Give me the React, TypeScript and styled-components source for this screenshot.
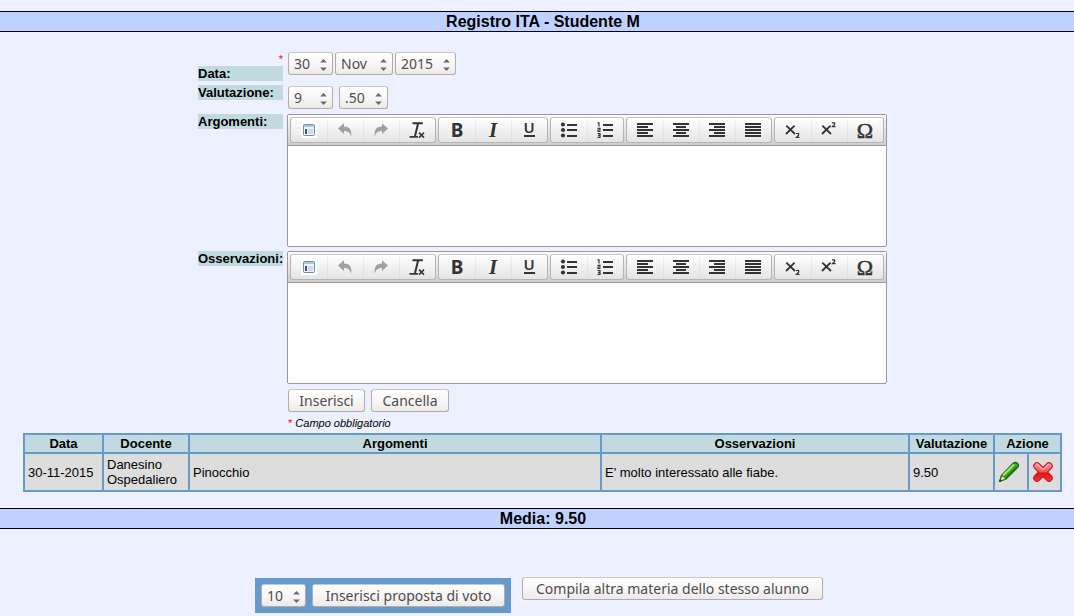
import React from 'react';
import styled, { createGlobalStyle } from 'styled-components';

const GlobalStyle = createGlobalStyle`
  *, *::before, *::after { box-sizing: border-box; }
  body {
    margin: 0;
    background: #ecf0ff;
    color: #000;
    font: 13px/15px "Liberation Sans", Arial, sans-serif;
    overflow: hidden;
  }
`;

const Page = styled.main`
  padding-top: 11px;
`;

const Banner = styled.h1`
  margin: 0;
  padding-left: 12px;
  height: 21px;
  border: solid #000;
  border-width: 1px 0;
  background: #bfd2ff;
  font-size: 16px;
  line-height: 19px;
  text-align: center;
`;

const Form = styled.form`
  display: grid;
  grid-template-columns: 85px minmax(0, 600px);
  justify-content: center;
  gap: 4px;
  padding: 20px 0 0 11px;
`;

const LabelCell = styled.div`
  font-weight: bold;
`;

const FieldLabel = styled.label`
  display: block;
  height: 15px;
  background: #c1dadf;
  white-space: nowrap;
`;

const Required = styled.span`
  color: #f00;
  font-size: 11px;
  font-weight: normal;
  font-style: normal;
`;

const StarLine = styled.div`
  height: 14px;
  line-height: 14px;
  text-align: right;
`;

const Fields = styled.div<{ $gap: number; $pad?: string }>`
  display: flex;
  align-items: flex-start;
  gap: ${(p) => p.$gap}px;
  padding: ${(p) => p.$pad ?? '1px 0 0 1px'};
`;

const controlFace = `
  height: 23px;
  border: 1px solid #b5aca3;
  border-top-color: #cdc6c0;
  border-radius: 3px;
  background: linear-gradient(#ffffff, #f8f7f6 50%, #edebe9);
  color: #4c4c4c;
  font: 14px/20px "Noto Sans", "Open Sans", sans-serif;
`;

const SelectBox = styled.span<{ $width: number }>`
  position: relative;
  display: block;
  flex: none;
  width: ${(p) => p.$width}px;
  height: 23px;

  svg {
    position: absolute;
    right: 6px;
    top: 7px;
    pointer-events: none;
  }
`;

const NativeSelect = styled.select`
  ${controlFace}
  display: block;
  width: 100%;
  padding: 0 0 0 5px;
  appearance: none;
`;

const Button = styled.button<{ $width: number }>`
  ${controlFace}
  flex: none;
  width: ${(p) => p.$width}px;
  padding: 0;
  white-space: nowrap;
`;

const Editor = styled.div`
  height: 133px;
  display: flex;
  flex-direction: column;
  border: 1px solid #999;
  border-radius: 2px;
  background: #fff;
`;

const Toolbar = styled.div`
  display: flex;
  flex: none;
  gap: 2px;
  height: 31px;
  padding: 2px;
  border-bottom: 1px solid #999;
  background: linear-gradient(#fbfbfb, #cfcfcf);
`;

const ToolGroup = styled.div`
  display: flex;
  height: 26px;
  border: 1px solid #b4b4b4;
  border-top-color: #c4c4c4;
  border-radius: 3px;
  background: linear-gradient(#ffffff, #e4e4e4);
`;

const Tool = styled.button`
  display: grid;
  place-items: center;
  width: 36px;
  height: 24px;
  padding: 0;
  border: 0;
  background: none;

  & + & {
    box-shadow: inset 1px 0 0 rgba(0, 0, 0, 0.04);
  }
`;

const EditorText = styled.textarea`
  flex: 1;
  width: 100%;
  padding: 8px;
  border: 0;
  outline: 0;
  resize: none;
  background: transparent;
  font: inherit;
`;

const Note = styled.p`
  grid-column: 2;
  margin: 0;
  padding: 0 0 0 1px;
  font-size: 11px;
  line-height: 14px;
  font-style: italic;
`;

const Register = styled.div`
  padding: 3px 12px 16px 23px;
`;

const Grid = styled.table`
  width: 100%;
  table-layout: fixed;
  border-collapse: collapse;
`;

const cellBorder = `border: 2px solid #6699cc;`;

const Head = styled.th`
  ${cellBorder}
  height: 19px;
  padding: 0;
  background: #c1dadf;
`;

const Cell = styled.td`
  ${cellBorder}
  height: 38px;
  padding: 0 3px;
  background: #dddddd;
`;

const IconLink = styled.a`
  display: flex;
`;

const Footer = styled.div`
  display: flex;
  justify-content: center;
  align-items: flex-start;
  gap: 11px;
  padding: 48px 0 0 4px;
`;

const Proposal = styled.form`
  display: flex;
  gap: 6px;
  margin-top: 1px;
  padding: 6px;
  height: 35px;
  background: #6699cc;
`;

function Select({ id, label, width, options }: { id: string; label: string; width: number; options: string[] }) {
  return (
    <SelectBox $width={width}>
      <NativeSelect id={id} aria-label={label} defaultValue={options[0]}>
        {options.map((o) => (
          <option key={o}>{o}</option>
        ))}
      </NativeSelect>
      <svg width="7" height="12" viewBox="0 0 7 12" fill="#6a6a6a">
        <path d="M3.5 0 L6.8 3.4 H.2Z M3.5 12 L6.8 8.6 H.2Z" />
      </svg>
    </SelectBox>
  );
}

const INK = '#333333';

const lines = (rows: number[][]) => (
  <g fill={INK}>
    {rows.map(([x, y, w]) => (
      <rect key={y} x={x} y={y} width={w} height="2" />
    ))}
  </g>
);

const GlyphText = styled.text`
  fill: ${INK};
  text-anchor: middle;
`;

const SansGlyph = styled(GlyphText)`
  font-family: "Noto Sans", sans-serif;
`;

const icons: Record<string, React.ReactNode> = {
  Modelli: (
    <>
      <rect x="0" y="0" width="16" height="16" fill="#fff" />
      <rect x="2.5" y="2.5" width="11" height="11" rx="1" fill="#eef4fa" stroke="#6d8dab" />
      <rect x="3" y="3" width="10" height="2" fill="#a9c8e6" />
      <rect x="4" y="7" width="2" height="5" fill="#2f5680" />
      <rect x="7" y="7" width="5" height="5" fill="#c9dcec" />
    </>
  ),
  Annulla: <path d="M1 6.5 7 1.2V4.4C12 4.4 15.2 7.2 14.2 14.6C13 10.6 11 9 7 9V12Z" fill="#a0a0a0" />,
  Ripristina: <path d="M15 6.5 9 1.2V4.4C4 4.4 .8 7.2 1.8 14.6C3 10.6 5 9 9 9V12Z" fill="#a0a0a0" />,
  'Elimina formattazione': (
    <g fill="none" stroke={INK}>
      <path d="M3.5 1.3H13.8M9.2 1.2 6 14" strokeWidth="2" />
      <path d="M.5 14.9H9" strokeWidth="1.7" />
      <path d="M10 10.6 15 15.6M15 10.6 10 15.6" strokeWidth="1.5" />
    </g>
  ),
  Grassetto: <SansGlyph x="8" y="15" fontSize="19" fontWeight="700">B</SansGlyph>,
  Corsivo: (
    <GlyphText x="8" y="15" fontSize="21" fontWeight="700" fontStyle="italic" fontFamily="Liberation Serif, serif">I</GlyphText>
  ),
  Sottolineato: (
    <>
      <SansGlyph x="8" y="11" fontSize="15" fontWeight="600">U</SansGlyph>
      <rect x="3" y="13" width="11" height="2" fill={INK} />
    </>
  ),
  'Elenco puntato': (
    <g fill={INK}>
      <circle cx="2" cy="2.5" r="2.1" />
      <circle cx="2" cy="8" r="2.1" />
      <circle cx="2" cy="13.5" r="2.1" />
      {lines([[6, 2, 10], [6, 7, 10], [6, 13, 10]])}
    </g>
  ),
  'Elenco numerato': (
    <g>
      <path d="M.5 .8H2V4.5M.5 6.3H3V8H1V9.5H3.5M.5 11.5H3V15.3H.5M1 13.3H3" fill="none" stroke={INK} strokeWidth="1.2" />
      {lines([[6, 2, 10], [6, 7, 10], [6, 13, 10]])}
    </g>
  ),
  'Allinea a sinistra': lines([[0, 1, 16], [0, 4, 11], [0, 7, 16], [0, 10, 11], [0, 13, 16]]),
  Centra: lines([[0, 1, 16], [3, 4, 10], [0, 7, 16], [3, 10, 10], [0, 13, 16]]),
  'Allinea a destra': lines([[0, 1, 16], [5, 4, 11], [0, 7, 16], [5, 10, 11], [0, 13, 16]]),
  Giustifica: lines([[0, 1, 16], [0, 4, 16], [0, 7, 16], [0, 10, 16], [0, 13, 16]]),
  Pedice: (
    <g fill="none" stroke={INK}>
      <path d="M1.3 3.6 10 12M9.6 3.6 1 12" strokeWidth="1.8" />
      <path d="M11 11.5H13.6V13.2L11.5 15.3H14.5" strokeWidth="1.2" />
    </g>
  ),
  Apice: (
    <g fill="none" stroke={INK}>
      <path d="M1.3 3.6 10 12M9.6 3.6 1 12" strokeWidth="1.8" />
      <path d="M11 .8H13.6V2.4L11.5 4.6H14.5" strokeWidth="1.2" />
    </g>
  ),
  'Carattere speciale': (
    <GlyphText x="8" y="16" fontSize="22" fontFamily="Liberation Serif, serif" stroke={INK} strokeWidth=".5">Ω</GlyphText>
  ),
};

const groups = [
  ['Modelli', 'Annulla', 'Ripristina', 'Elimina formattazione'],
  ['Grassetto', 'Corsivo', 'Sottolineato'],
  ['Elenco puntato', 'Elenco numerato'],
  ['Allinea a sinistra', 'Centra', 'Allinea a destra', 'Giustifica'],
  ['Pedice', 'Apice', 'Carattere speciale'],
];

function RichEditor({ id }: { id: string }) {
  return (
    <Editor>
      <Toolbar role="toolbar">
        {groups.map((group) => (
          <ToolGroup key={group[0]}>
            {group.map((name) => (
              <Tool key={name} type="button" aria-label={name}>
                <svg width="16" height="16" viewBox="0 0 16 16" overflow="visible">{icons[name]}</svg>
              </Tool>
            ))}
          </ToolGroup>
        ))}
      </Toolbar>
      <EditorText id={id} />
    </Editor>
  );
}

function PencilIcon() {
  return (
    <svg width="22" height="22" viewBox="0 0 22 22">
      <path d="M1.5 20.5 3.5 14.5 15 2.5Q17.5 .5 19.5 2.5T19.5 6.5L8 18Z" fill="#3fae1c" stroke="#17611a" strokeWidth="1.2" strokeLinejoin="round" />
      <path d="M5 14.5 16 3.5" stroke="#a5ec6a" strokeWidth="2" />
      <path d="M7.5 16.8 18.8 5.8" stroke="#1f8212" strokeWidth="1.6" />
      <path d="M1.8 20.2 3.6 15Q6.5 15 7.6 17.9Z" fill="#ddeec0" stroke="#17611a" strokeWidth=".8" />
      <path d="M1.3 20.8 2.2 18 4 19.8Z" fill="#143f14" />
    </svg>
  );
}

function DeleteIcon() {
  return (
    <svg width="22" height="22" viewBox="0 0 22 22">
      <defs>
        <linearGradient id="cross" x1="0" y1="0" x2="0" y2="1">
          <stop offset="0" stopColor="#ff9c9c" />
          <stop offset=".5" stopColor="#ee5555" />
          <stop offset=".55" stopColor="#dc1414" />
          <stop offset="1" stopColor="#f43838" />
        </linearGradient>
      </defs>
      <path
        d="M3.6 1.9Q5.3 1 6.8 2.3L11 6.4 15.2 2.3Q16.9 1 18.6 2.1L20 3.6Q21 5.3 19.7 6.8L15.5 11 19.7 15.2Q21 16.8 20 18.4L18.6 19.9Q16.9 21 15.2 19.7L11 15.6 6.8 19.7Q5.3 21 3.6 20L2 18.4Q1 16.8 2.3 15.2L6.5 11 2.3 6.8Q1 5.3 2 3.6Z"
        fill="url(#cross)"
        stroke="#c41420"
        strokeWidth="1.1"
        strokeLinejoin="round"
      />
      <path d="M5 3 11 8.5 17 3" fill="none" stroke="#ffc8c8" strokeWidth="1" />
    </svg>
  );
}

export default function App() {
  return (
    <Page>
      <GlobalStyle />
      <Banner>Registro ITA - Studente M</Banner>
      <Form onSubmit={(e) => e.preventDefault()}>
        <LabelCell>
          <StarLine>
            <Required>*</Required>
          </StarLine>
          <FieldLabel htmlFor="giorno">Data:</FieldLabel>
        </LabelCell>
        <Fields $gap={2} $pad="0 0 0 1px">
          <Select id="giorno" label="Giorno" width={45} options={['30']} />
          <Select id="mese" label="Mese" width={58} options={['Nov']} />
          <Select id="anno" label="Anno" width={61} options={['2015']} />
        </Fields>

        <LabelCell>
          <FieldLabel htmlFor="voto">Valutazione:</FieldLabel>
        </LabelCell>
        <Fields $gap={6} $pad="1px 0 1px 1px">
          <Select id="voto" label="Voto" width={45} options={['9']} />
          <Select id="decimali" label="Decimali" width={49} options={['.50']} />
        </Fields>

        <LabelCell>
          <FieldLabel htmlFor="argomenti">Argomenti:</FieldLabel>
        </LabelCell>
        <RichEditor id="argomenti" />

        <LabelCell>
          <FieldLabel htmlFor="osservazioni">Osservazioni:</FieldLabel>
        </LabelCell>
        <RichEditor id="osservazioni" />

        <span />
        <Fields $gap={6}>
          <Button type="submit" $width={77}>Inserisci</Button>
          <Button type="reset" $width={78}>Cancella</Button>
        </Fields>
        <Note>
          <Required>*</Required> Campo obbligatorio
        </Note>
      </Form>

      <Register>
        <Grid>
          <colgroup>
            <col style={{ width: 79 }} />
            <col style={{ width: 86 }} />
            <col />
            <col style={{ width: 308 }} />
            <col style={{ width: 85 }} />
            <col style={{ width: 34 }} />
            <col style={{ width: 33 }} />
          </colgroup>
          <thead>
            <tr>
              <Head>Data</Head>
              <Head>Docente</Head>
              <Head>Argomenti</Head>
              <Head>Osservazioni</Head>
              <Head>Valutazione</Head>
              <Head colSpan={2}>Azione</Head>
            </tr>
          </thead>
          <tbody>
            <tr>
              <Cell>30-11-2015</Cell>
              <Cell>Danesino Ospedaliero</Cell>
              <Cell>Pinocchio</Cell>
              <Cell>E' molto interessato alle fiabe.</Cell>
              <Cell>9.50</Cell>
              <Cell>
                <IconLink href="#modifica" aria-label="Modifica"><PencilIcon /></IconLink>
              </Cell>
              <Cell>
                <IconLink href="#elimina" aria-label="Elimina"><DeleteIcon /></IconLink>
              </Cell>
            </tr>
          </tbody>
        </Grid>
      </Register>

      <Banner as="h2">Media: 9.50</Banner>
      <Footer>
        <Proposal onSubmit={(e) => e.preventDefault()}>
          <Select id="proposta" label="Voto proposto" width={45} options={['10']} />
          <Button type="submit" $width={193}>Inserisci proposta di voto</Button>
        </Proposal>
        <Button type="button" $width={301}>Compila altra materia dello stesso alunno</Button>
      </Footer>
    </Page>
  );
}
